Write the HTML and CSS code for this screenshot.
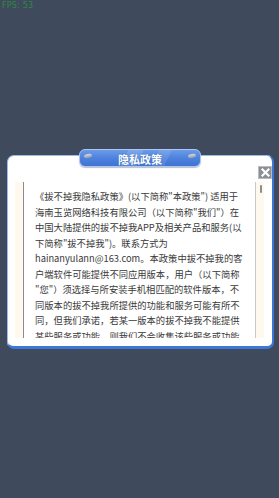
FILE: index.html
```html
<!DOCTYPE html>
<html lang="zh">
<head>
<meta charset="utf-8">
<link rel="stylesheet" href="styles.css">
</head>
<body>
<div class="fps">FPS: 53</div>
<div class="dialog">
  <div class="title">
    <span class="dot dot-l"></span>
    <span class="title-text">隐私政策</span>
    <span class="dot dot-r"></span>
  </div>
  <div class="close">
    <svg width="9" height="9" viewBox="0 0 9 9"><path d="M1.5 1.5 L7.5 7.5 M7.5 1.5 L1.5 7.5" stroke="#fff" stroke-width="2.2" stroke-linecap="square"/></svg>
  </div>
  <div class="panel">
    <div class="side"></div>
    <div class="text">
      《拔不掉我隐私政策》(以下简称"本政策") 适用于<br>
      海南玉览网络科技有限公司（以下简称"我们"）在<br>
      中国大陆提供的拔不掉我APP及相关产品和服务(以<br>
      下简称"拔不掉我")。联系方式为<br>
      hainanyulann@163.com。本政策中拔不掉我的客<br>
      户端软件可能提供不同应用版本，用户（以下简称<br>
      "您"）须选择与所安装手机相匹配的软件版本，不<br>
      同版本的拔不掉我所提供的功能和服务可能有所不<br>
      同，但我们承诺，若某一版本的拔不掉我不能提供<br>
      某些服务或功能，则我们不会收集该些服务或功能
    </div>
    <div class="side scroll"><span class="thumb"></span></div>
  </div>
</div>
</body>
</html>
```

FILE: styles.css
```css
html, body {
  margin: 0;
  padding: 0;
}
body {
  width: 279px;
  height: 498px;
  background: #3f4a5d;
  font-family: "Noto Sans CJK SC", "Noto Sans", sans-serif;
  position: relative;
  overflow: hidden;
  padding-top: 155px;
  box-sizing: border-box;
}
.fps {
  position: absolute;
  left: 2px;
  top: 1px;
  font-family: "DejaVu Sans", sans-serif;
  font-size: 8px;
  color: #2c8a3c;
  letter-spacing: 0.2px;
}
.dialog {
  position: relative;
  box-sizing: border-box;
  margin-left: 7px;
  width: 267px;
  height: 194px;
  background: #fff;
  border: 1px solid #9cb9ea;
  border-right: 2px solid #3d78d6;
  border-bottom: 3px solid #3d78d6;
  border-radius: 7px;
  padding: 26px 8px 7px 7px;
}
.title {
  position: absolute;
  left: 71px;
  top: -7px;
  width: 122px;
  height: 18px;
  box-sizing: border-box;
  border: 1px solid #a9c6f4;
  border-radius: 6px;
  background:
    linear-gradient(115deg, transparent 0 38%, rgba(255,255,255,0.13) 38% 50%, transparent 50% 62%, rgba(255,255,255,0.1) 62% 72%, transparent 72%),
    linear-gradient(180deg, #6c9be8 0%, #4b80dc 55%, #3f74d3 100%);
  box-shadow: 0 1px 1px rgba(0,0,0,0.25);
  display: flex;
  align-items: center;
  justify-content: center;
}
.title-text {
  color: #fff;
  font-size: 11px;
  font-weight: bold;
  line-height: 1;
  text-shadow: 0 0 1px #2d5aa8;
  margin-top: 2px;
}
.dot {
  position: absolute;
  top: 4px;
  width: 8px;
  height: 4px;
  border-radius: 50%;
  background: linear-gradient(180deg, #d7dce4, #8e97a6);
  transform: rotate(-10deg);
}
.dot-l { left: 4px; }
.dot-r { right: 4px; }
.close {
  position: absolute;
  right: 0;
  top: 10px;
  width: 14px;
  height: 13px;
  box-sizing: border-box;
  background: #8b8e93;
  border: 1px solid #b9bcc0;
  display: flex;
  align-items: center;
  justify-content: center;
}
.panel {
  display: flex;
  height: 156px;
  background: #fff9f1;
}
.side {
  width: 8px;
  flex: none;
  background: #fff8ee;
}
.scroll {
  position: relative;
}
.thumb {
  position: absolute;
  left: 4px;
  top: 3px;
  width: 2px;
  height: 8px;
  border-radius: 1px;
  background: #8d8d8d;
}
.text {
  flex: 1;
  background: #fff;
  border-left: 1px solid #8b8b8b;
  border-right: 1px solid #c9c9c9;
  overflow: hidden;
  padding: 7px 0 0 11px;
  font-size: 9.3px;
  line-height: 15.5px;
  color: #3a3a3a;
  white-space: nowrap;
}
```
